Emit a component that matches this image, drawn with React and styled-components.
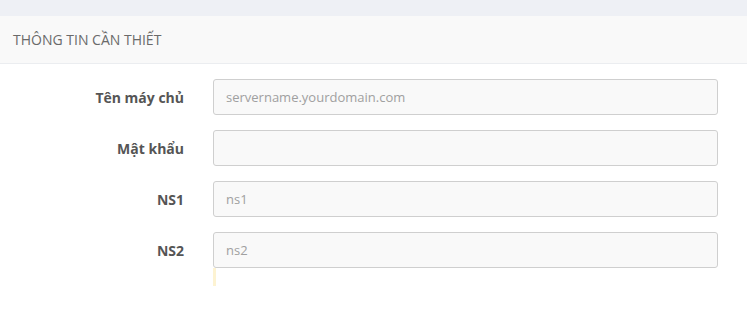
import { Fragment } from "react";
import styled, { createGlobalStyle } from "styled-components";

const GlobalStyle = createGlobalStyle`
  body {
    margin: 0;
    background: #fff;
    font-family: "Open Sans", "Noto Sans", sans-serif;
  }
`;

const Page = styled.div`
  width: 747px;
  height: 317px;
  background: #fff;
  overflow: hidden;
`;

const TopBand = styled.div`
  height: 16px;
  background: #eef0f5;
`;

const Header = styled.div`
  height: 47px;
  display: flex;
  align-items: center;
  padding-left: 13px;
  background: #f9f9f9;
  border-bottom: 1px solid #ebedf0;
`;

const Title = styled.h3`
  margin: 0;
  font-size: 14px;
  font-weight: 400;
  color: #6a6a6a;
`;

const Form = styled.div`
  display: grid;
  grid-template-columns: 184px 505px;
  column-gap: 29px;
  row-gap: 15px;
  padding-top: 15px;
  align-items: center;
`;

const Label = styled.label`
  text-align: right;
  font-size: 14px;
  font-weight: 700;
  color: #555;
`;

const Input = styled.input`
  box-sizing: border-box;
  height: 36px;
  width: 100%;
  padding: 0 12px;
  border: 1px solid #cfcfcf;
  border-radius: 3px;
  background: #f9f9f9;
  font-family: "Open Sans", "Noto Sans", sans-serif;
  font-size: 13px;
  color: #555;
  outline: none;
  &::placeholder {
    color: #a0a0a0;
  }
`;

const Spacer = styled.div``;

const Mark = styled.div`
  width: 3px;
  height: 18px;
  margin-top: -15px;
  background: #fdf3d2;
`;

const fields = [
  { label: "Tên máy chủ", placeholder: "servername.yourdomain.com" },
  { label: "Mật khẩu", placeholder: "", type: "password" },
  { label: "NS1", placeholder: "ns1" },
  { label: "NS2", placeholder: "ns2" },
];

export default function App() {
  return (
    <Page>
      <GlobalStyle />
      <TopBand />
      <Header>
        <Title>THÔNG TIN CẦN THIẾT</Title>
      </Header>
      <Form>
        {fields.map((f) => (
          <Fragment key={f.label}>
            <Label>{f.label}</Label>
            <Input type={f.type || "text"} placeholder={f.placeholder} />
          </Fragment>
        ))}
        <Spacer />
        <Mark />
      </Form>
    </Page>
  );
}
